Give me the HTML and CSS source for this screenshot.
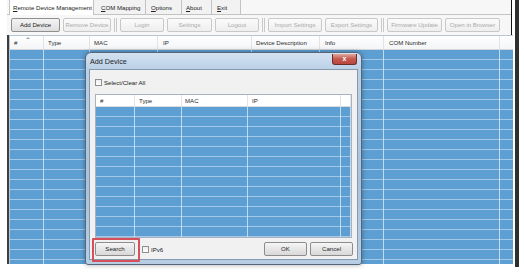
FILE: index.html
```html
<!DOCTYPE html>
<html>
<head>
<meta charset="utf-8">
<link rel="stylesheet" href="styles.css">
</head>
<body>
<div class="screen">
  <div class="app">
    <div class="top">
      <div class="tabs">
        <div class="tab active t1"><u>R</u>emote Device Management</div>
        <div class="tab t2"><u>C</u>OM Mapping</div>
        <div class="tab t3"><u>O</u>ptions</div>
        <div class="tab t4"><u>A</u>bout</div>
        <div class="tab t5"><u>E</u>xit</div>
      </div>
      <div class="toolbar">
        <div class="tbtn on w49">Add Device</div>
        <div class="tbtn w48">Remove Device</div>
        <div class="sep"></div>
        <div class="tbtn w44">Login</div>
        <div class="tbtn w45">Settings</div>
        <div class="tbtn w44">Logout</div>
        <div class="sep"></div>
        <div class="tbtn w54">Import Settings</div>
        <div class="tbtn w53">Export Settings</div>
        <div class="sep"></div>
        <div class="tbtn w55">Firmware Update</div>
        <div class="tbtn w55">Open in Browser</div>
      </div>
    </div>
    <div class="gridwrap">
      <div class="grid">
        <div class="ghead">
          <div class="gc g1">#<span class="sort"></span></div>
          <div class="gc g2">Type</div>
          <div class="gc g3">MAC</div>
          <div class="gc g4">IP</div>
          <div class="gc g5">Device Description</div>
          <div class="gc g6">Info</div>
          <div class="gc g7">COM Number</div>
          <div class="gc g8"></div>
        </div>
        <div class="gbody">
          <div class="bc g1"></div>
          <div class="bc g2"></div>
          <div class="bc g3"></div>
          <div class="bc g4"></div>
          <div class="bc g5"></div>
          <div class="bc g6"></div>
          <div class="bc g7"></div>
          <div class="bc g8"></div>
        </div>
      </div>
    </div>
  </div>
  <div class="bar"></div>

  <div class="dialog">
    <div class="dtitle">Add Device</div>
    <div class="close">x</div>
    <div class="client">
      <div class="chk top-chk"><span class="box"></span>Select/Clear All</div>
      <div class="list">
        <div class="lhead">
          <div class="lc l1">#</div>
          <div class="lc l2">Type</div>
          <div class="lc l3">MAC</div>
          <div class="lc l4">IP</div>
          <div class="lc l5"></div>
        </div>
        <div class="lbody">
          <div class="lb l1"></div>
          <div class="lb l2"></div>
          <div class="lb l3"></div>
          <div class="lb l4"></div>
          <div class="lb l5"></div>
        </div>
      </div>
      <div class="dbtns">
        <div class="btn search">Search</div>
        <div class="chk ipv6"><span class="box"></span>IPv6</div>
        <div class="spacer"></div>
        <div class="btn">OK</div>
        <div class="btn">Cancel</div>
      </div>
    </div>
    <div class="highlight"></div>
  </div>
</div>
</body>
</html>
```

FILE: styles.css
```css
* { box-sizing: border-box; }
html, body { margin: 0; padding: 0; background: #ffffff; }
body {
  font-family: "Liberation Sans", Arial, sans-serif;
  font-size: 6.1px;
  color: #222;
  width: 524px;
  height: 273px;
  overflow: hidden;
}
.screen {
  position: relative;
  display: flex;
  width: 524px;
  height: 273px;
}
.app {
  margin-left: 7px;
  width: 506px;
  height: 264px;
  display: flex;
  flex-direction: column;
}
.top {
  background: #f7f7f7;
  border-right: 1px solid #111;
  margin-right: 1px;
}
.tabs {
  height: 15px;
  display: flex;
  padding-left: 2px;
  border-bottom: 1px solid #c3c3c3;
}
.tab {
  height: 15px;
  line-height: 15px;
  padding-left: 3px;
  border: 1px solid #c3c3c3;
  border-top: none;
  border-left: none;
  background: #f2f2f2;
  color: #222;
  white-space: nowrap;
  overflow: hidden;
}
.tab u { text-decoration: underline; text-underline-offset: 1px; }
.tab.active { background: #fff; height: 15px; border-left: 1px solid #c3c3c3; border-bottom: none; }
.t1 { width: 85px; }
.t2 { width: 52px; padding-left: 7px; }
.t3 { width: 36px; padding-left: 5px; }
.t4 { width: 30px; padding-left: 4px; }
.t5 { width: 29px; padding-left: 5px; }

.toolbar {
  height: 20px;
  display: flex;
  align-items: flex-start;
  padding: 3px 0 0 4px;
  gap: 3px;
}
.tbtn {
  height: 14px;
  line-height: 12px;
  text-align: center;
  border: 1px solid #c8c8c8;
  border-radius: 2px;
  background: linear-gradient(#fbfbfb, #eeeeee);
  color: #ababab;
  white-space: nowrap;
}
.tbtn.on {
  border-color: #8f8f8f;
  background: linear-gradient(#f4f4f4, #dedede);
  color: #1c1c1c;
}
.w44 { width: 44px; }
.w45 { width: 45px; }
.w48 { width: 48px; }
.w49 { width: 49px; }
.w53 { width: 53px; }
.w54 { width: 54px; }
.w55 { width: 55px; }
.sep {
  width: 3px;
  height: 14px;
  border-left: 1px solid #c9c9c9;
  border-right: 1px solid #c9c9c9;
}

.gridwrap {
  flex: 1;
  display: flex;
  border-left: 2px solid #3d3d3d;
  background: #f2f2f2;
}
.grid {
  flex: 1;
  display: flex;
  flex-direction: column;
  border-top: 1px solid #b7c6d6;
  border-left: 1px solid #b7c6d6;
}
.ghead {
  height: 14px;
  display: flex;
  background: linear-gradient(#ffffff, #f4f5f7);
  border-bottom: 1px solid #d2d6db;
}
.gc {
  height: 13px;
  line-height: 13px;
  padding-left: 4px;
  border-right: 1px solid #e1e3e6;
  color: #2a2a2a;
  white-space: nowrap;
  position: relative;
}
.g1 { width: 34px; }
.g2 { width: 46px; }
.g3 { width: 68px; }
.g4 { width: 94px; padding-left: 5px; }
.g5 { width: 68px; }
.g6 { width: 64px; padding-left: 5px; }
.g7 { width: 116px; padding-left: 5px; }
.g8 { flex: 1; border-right: none; }
.sort {
  position: absolute;
  left: 16px;
  top: 1px;
  width: 0;
  height: 0;
  border-left: 2px solid transparent;
  border-right: 2px solid transparent;
  border-bottom: 2px solid #9aa5b0;
}
.gbody {
  flex: 1;
  display: flex;
  background: repeating-linear-gradient(to bottom, #5d9fd3 0px, #5d9fd3 9px, #a2c9e9 9px, #a2c9e9 10px);
}
.bc {
  height: 100%;
  border-right: 1px solid rgba(225, 238, 249, 0.75);
}
.bc.g8 { border-right: none; }

.bar {
  width: 4px;
  height: 267px;
  margin-left: 2px;
  background: #2f2f2f;
}

/* dialog */
.dialog {
  position: absolute;
  left: 85px;
  top: 52px;
  width: 277px;
  height: 213px;
  border: 1px solid #56677b;
  border-radius: 6px 6px 3px 3px;
  background: linear-gradient(to bottom, #d3e2f1 0px, #bcd1e7 16px, #a9c3de 60%, #b7cde4 100%);
  padding: 0 3px 4px 3px;
  display: flex;
  flex-direction: column;
  box-shadow: 0 0 5px rgba(0, 0, 0, 0.35);
}
.dtitle {
  height: 16px;
  line-height: 17px;
  padding-left: 1px;
  font-size: 7.2px;
  color: #1d1d1d;
}
.close {
  position: absolute;
  left: 246px;
  top: 1px;
  width: 25px;
  height: 11px;
  border: 1px solid #6d2e2b;
  border-top: none;
  border-radius: 0 0 3px 3px;
  background: linear-gradient(#e0a8a0, #c5574d 50%, #b8483f);
  color: #ffffff;
  font-weight: bold;
  font-size: 7px;
  text-align: center;
  line-height: 9px;
}
.client {
  flex: 1;
  display: flex;
  flex-direction: column;
  border: 1px solid #8498ae;
  background: #f1f1f1;
}
.chk {
  display: flex;
  align-items: center;
  height: 7px;
  color: #222;
  white-space: nowrap;
}
.box {
  width: 7px;
  height: 7px;
  border: 1px solid #8e8f8f;
  background: linear-gradient(#eeeeee, #ffffff);
  margin-right: 2px;
}
.top-chk { margin: 9px 0 0 5px; }
.list {
  margin: 8px 5px 0 5px;
  height: 144px;
  display: flex;
  flex-direction: column;
  border: 1px solid #a6b2bf;
  background: #ffffff;
}
.lhead {
  height: 12px;
  display: flex;
  border-bottom: 1px solid #d8dce0;
}
.lc {
  height: 11px;
  line-height: 12px;
  padding-left: 4px;
  border-right: 1px solid #e2e4e7;
  color: #2a2a2a;
}
.l1 { width: 39px; }
.l2 { width: 47px; }
.l3 { width: 66px; padding-left: 3px; }
.l4 { width: 93px; padding-left: 4px; }
.l5 { flex: 1; }
.lbody {
  flex: 1;
  display: flex;
  background: repeating-linear-gradient(to bottom, #5d9fd3 0px, #5d9fd3 9px, #a2c9e9 9px, #a2c9e9 10px);
}
.lb {
  height: 100%;
  border-right: 1px solid rgba(225, 238, 249, 0.75);
}
.dbtns {
  margin-top: 4px;
  height: 14px;
  display: flex;
  align-items: center;
  padding: 0 4px 0 5px;
  gap: 3px;
}
.btn {
  width: 43px;
  height: 14px;
  line-height: 12px;
  text-align: center;
  border: 1px solid #8d8d8d;
  border-radius: 2px;
  background: linear-gradient(#f6f6f6, #e6e6e6 50%, #d9d9d9);
  color: #1e1e1e;
}
.btn.search { width: 40px; }
.ipv6 { margin-left: 4px; }
.spacer { flex: 1; }
.highlight {
  position: absolute;
  left: 6px;
  top: 185px;
  width: 48px;
  height: 24px;
  border: 2px solid #d5505a;
  border-radius: 1px;
}
```
